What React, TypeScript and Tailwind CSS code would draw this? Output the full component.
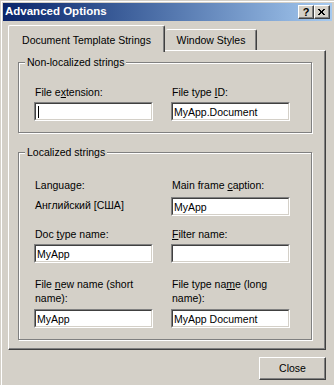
import React from 'react'

const font = { fontFamily: '"Liberation Sans", Arial, sans-serif' }

function U({ children }: { children: React.ReactNode }) {
  return <span className="underline">{children}</span>
}

function Edit({ value, caret }: { value?: string; caret?: boolean }) {
  return (
    <div className="h-[19px] w-[119px] border-t border-l border-r border-b border-t-[#808080] border-l-[#808080] border-r-white border-b-white">
      <div className="flex h-full items-center border-t border-l border-r border-b border-t-[#404040] border-l-[#404040] border-r-[#d4d0c8] border-b-[#d4d0c8] bg-white pl-[1px] leading-[14px]">
        {caret && <span className="ml-[1px] h-[12px] w-px bg-black" />}
        {value}
      </div>
    </div>
  )
}

function Group({ title, className, children }: { title: string; className: string; children: React.ReactNode }) {
  return (
    <div className={'relative ml-[9px] w-[294px] border border-[#808080] shadow-[inset_1px_1px_0_#fff,1px_1px_0_#fff] ' + className}>
      <span className="absolute -top-[8px] left-[6px] bg-[#d4d0c8] px-[2px] leading-[14px]">{title}</span>
      {children}
    </div>
  )
}

function Label({ children }: { children: React.ReactNode }) {
  return <div className="pl-[1px] leading-[14px]">{children}</div>
}

export default function App() {
  return (
    <div className="h-[385px] w-[334px] overflow-hidden bg-[#d4d0c8] pl-[3px] pr-[2px] pt-[3px] text-[10.5px] text-black shadow-[inset_1px_1px_0_#d4d0c8,inset_2px_2px_0_#fff]" style={font}>
      {/* title bar */}
      <div className="flex h-[18px] items-center justify-between bg-linear-to-r from-[#0a246a] to-[#a6caf0] pl-[2px] pr-[2px]">
        <span className="text-[11.5px] font-bold text-white">Advanced Options</span>
        <div className="flex">
          <div className="flex h-[14px] w-[16px] items-center justify-center border-t border-l border-r border-b border-t-white border-l-white border-r-[#404040] border-b-[#404040] bg-[#d4d0c8] text-[11px] leading-none font-bold shadow-[inset_-1px_-1px_0_#808080]">?</div>
          <div className="flex h-[14px] w-[16px] items-center justify-center border-t border-l border-r border-b border-t-white border-l-white border-r-[#404040] border-b-[#404040] bg-[#d4d0c8] shadow-[inset_-1px_-1px_0_#808080]">
            <svg width="8" height="7" viewBox="0 0 8 7">
              <path d="M0 0 L6 6 M1 0 L7 6 M6 0 L0 6 M7 0 L1 6" stroke="#000" strokeWidth="1" fill="none" />
            </svg>
          </div>
        </div>
      </div>

      {/* tabs */}
      <div className="ml-[5px] mt-[4px] flex h-[25px] items-end">
        <div className="relative z-10 -mb-[2px] flex h-[27px] w-[157px] justify-center rounded-t-[2px] border-t border-l border-r border-t-white border-l-white border-r-[#404040] bg-[#d4d0c8] pt-[7px] leading-[14px] shadow-[inset_-1px_0_0_#808080]">
          Document Template Strings
        </div>
        <div className="ml-px flex h-[21px] w-[91px] justify-center rounded-t-[2px] border-t border-r border-t-white border-r-[#404040] pt-[3px] leading-[14px] shadow-[inset_-1px_0_0_#808080]">
          Window Styles
        </div>
      </div>

      {/* panel */}
      <div className="ml-[5px] h-[300px] w-[318px] border-t border-l border-r border-b border-t-white border-l-white border-r-[#404040] border-b-[#404040] shadow-[inset_-1px_-1px_0_#808080]">
        <Group title="Non-localized strings" className="mt-[11px] h-[71px]">
          <div className="grid grid-cols-[119px_119px] gap-x-[18px] pl-[15px] pt-[22px]">
            <div>
              <Label>File e<U>x</U>tension:</Label>
              <div className="mt-[3px]"><Edit caret /></div>
            </div>
            <div>
              <Label>File type <U>I</U>D:</Label>
              <div className="mt-[3px]"><Edit value="MyApp.Document" /></div>
            </div>
          </div>
        </Group>

        <Group title="Localized strings" className="mt-[19px] h-[188px]">
          <div className="grid grid-cols-[119px_119px] gap-x-[18px] pl-[15px] pt-[25px]">
            <div>
              <Label>Language:</Label>
              <div className="mt-[6px]"><Label>Английский [США]</Label></div>
            </div>
            <div>
              <Label>Main frame <U>c</U>aption:</Label>
              <div className="mt-[5px]"><Edit value="MyApp" /></div>
            </div>

            <div className="mt-[11px]">
              <Label>Doc <U>t</U>ype name:</Label>
              <div className="mt-[3px]"><Edit value="MyApp" /></div>
            </div>
            <div className="mt-[11px]">
              <Label><U>F</U>ilter name:</Label>
              <div className="mt-[3px]"><Edit /></div>
            </div>

            <div className="mt-[14px]">
              <Label>File <U>n</U>ew name (short<br />name):</Label>
              <div className="mt-[4px]"><Edit value="MyApp" /></div>
            </div>
            <div className="mt-[14px]">
              <Label>File type na<U>m</U>e (long<br />name):</Label>
              <div className="mt-[4px]"><Edit value="MyApp Document" /></div>
            </div>
          </div>
        </Group>
      </div>

      {/* footer */}
      <div className="ml-[5px] mt-[7px] flex w-[318px] justify-end">
        <div className="flex h-[23px] w-[67px] items-center justify-center border-t border-l border-r border-b border-t-white border-l-white border-r-[#404040] border-b-[#404040] shadow-[inset_-1px_-1px_0_#808080]">
          Close
        </div>
      </div>
    </div>
  )
}
